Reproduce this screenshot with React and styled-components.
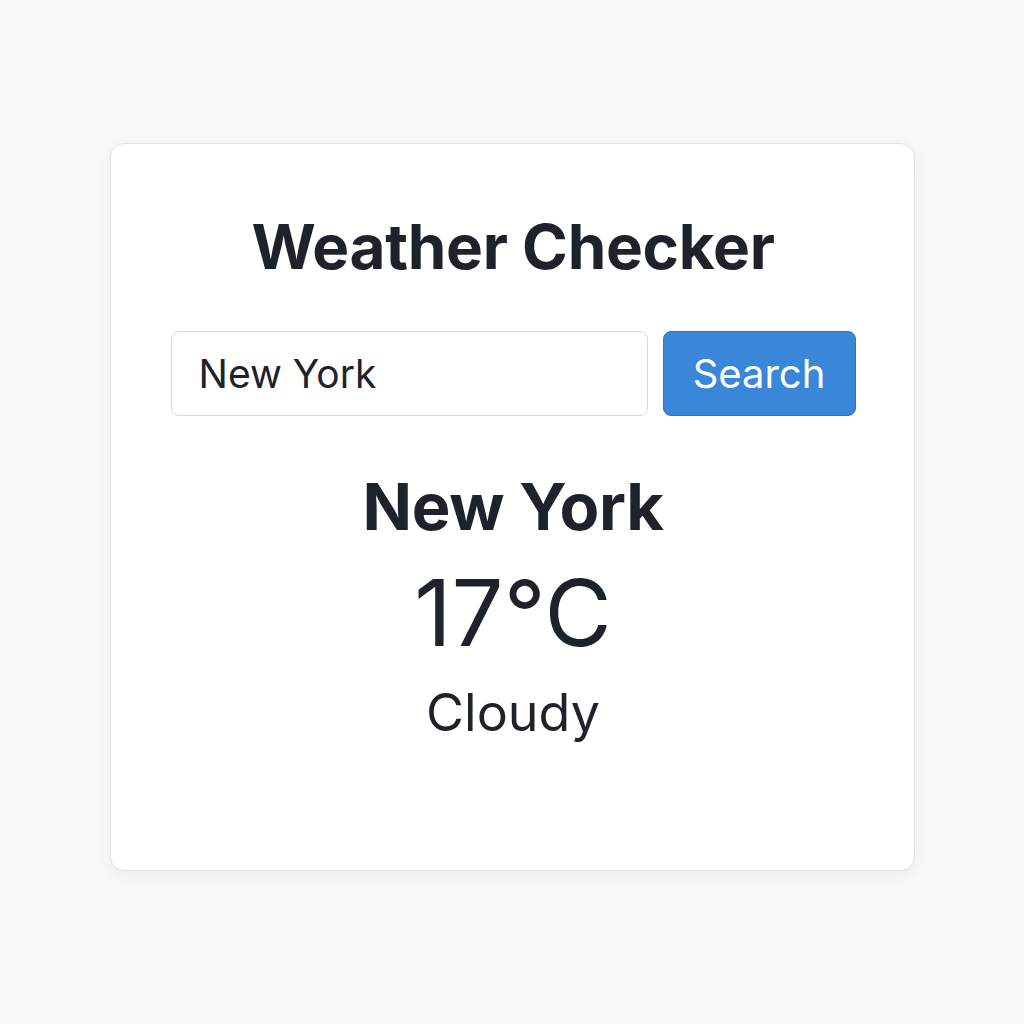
import React, { useState } from "react";
import styled, { createGlobalStyle } from "styled-components";

const GlobalStyle = createGlobalStyle`
  html, body {
    margin: 0;
    padding: 0;
    background: #f8f8f8;
    font-family: Inter, "Noto Sans", "Liberation Sans", sans-serif;
  }
`;

const Page = styled.div`
  min-height: 1024px;
  box-sizing: border-box;
  padding-top: 143px;
  display: flex;
  justify-content: center;
  align-items: flex-start;
`;

const Card = styled.div`
  width: 805px;
  height: 728px;
  box-sizing: border-box;
  background: #ffffff;
  border: 1px solid #e2e2e2;
  border-radius: 14px;
  box-shadow: 0 4px 14px rgba(0, 0, 0, 0.05);
  padding: 60px 58px 0 60px;
  display: flex;
  flex-direction: column;
  align-items: center;
`;

const Title = styled.h1`
  margin: 0;
  font-size: 62px;
  font-weight: 700;
  color: #1d222b;
  line-height: 86px;
  letter-spacing: -0.3px;
`;

const SearchRow = styled.form`
  width: 100%;
  display: flex;
  gap: 15px;
  margin-top: 41px;
`;

const Input = styled.input`
  flex: 1;
  min-width: 0;
  height: 85px;
  box-sizing: border-box;
  border: 1.5px solid #d9d9d9;
  border-radius: 8px;
  padding: 0 27px;
  font-family: inherit;
  font-size: 39px;
  color: #1d222b;
  outline: none;
`;

const Button = styled.button`
  flex-shrink: 0;
  width: 193px;
  height: 85px;
  padding: 0;
  border: 1px solid #2f74c8;
  border-radius: 8px;
  background: #3a86d8;
  color: #ffffff;
  font-family: inherit;
  font-size: 40px;
  cursor: pointer;
`;

const City = styled.h2`
  margin: 53px 0 0;
  font-size: 65px;
  font-weight: 700;
  color: #1d222b;
  line-height: 76px;
  letter-spacing: -0.3px;
`;

const Temp = styled.div`
  margin-top: 18px;
  font-size: 92px;
  font-weight: 400;
  color: #1d222b;
  line-height: 100px;
`;

const Condition = styled.div`
  margin-top: 18px;
  font-size: 52px;
  color: #1d222b;
  line-height: 64px;
`;

export default function App() {
  const [query, setQuery] = useState("New York");
  return (
    <>
      <GlobalStyle />
      <Page>
        <Card>
          <Title>Weather Checker</Title>
          <SearchRow onSubmit={(e) => e.preventDefault()}>
            <Input value={query} onChange={(e) => setQuery(e.target.value)} />
            <Button type="submit">Search</Button>
          </SearchRow>
          <City>New York</City>
          <Temp>17°C</Temp>
          <Condition>Cloudy</Condition>
        </Card>
      </Page>
    </>
  );
}
